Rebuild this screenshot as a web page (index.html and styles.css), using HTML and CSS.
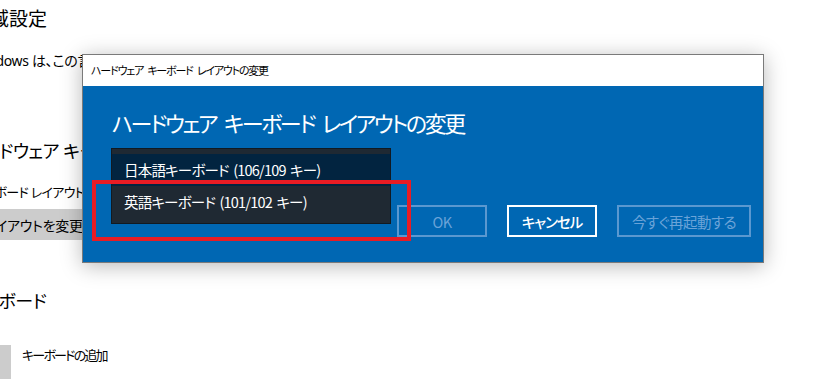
FILE: index.html
```html
<html>
  <head>
    <meta http-equiv="content-type" content="text/html; charset=utf-8" />
    <link rel="stylesheet" href="styles.css">
  </head>
  <body>
    <main class="settings">
      <h1 class="page-title">地域設定</h1>
      <p class="note">Windows は、この言語に基づいていくつかの形式を設定しました。</p>
      <h2 class="section-title hw">ハードウェア キーボード</h2>
      <p class="label">キーボード レイアウト: 日本語キーボード (106/109 キー)</p>
      <button class="grey-btn">レイアウトを変更する</button>
      <h2 class="section-title keyboards">キーボード</h2>
      <div class="add-item">
        <span class="add-icon">+</span>
        <span class="add-text">キーボードの追加</span>
      </div>
    </main>

    <div class="dialog">
      <div class="titlebar">ハードウェア キーボード レイアウトの変更</div>
      <div class="dialog-body">
        <h2 class="dialog-title">ハードウェア キーボード レイアウトの変更</h2>
        <div class="dialog-row">
          <ul class="layout-list">
            <li class="layout-item selected">日本語キーボード (106/109 キー)</li>
            <li class="layout-item">英語キーボード (101/102 キー)</li>
          </ul>
          <div class="buttons">
            <button class="dlg-btn disabled">OK</button>
            <button class="dlg-btn primary">キャンセル</button>
            <button class="dlg-btn disabled wide">今すぐ再起動する</button>
          </div>
        </div>
      </div>
    </div>
    <div class="highlight"></div>
  </body>
</html>
```

FILE: styles.css
```css
body {
  margin: 0;
  padding: 0;
  position: relative;
  width: 830px;
  height: 379px;
  overflow: hidden;
  background: #fff;
  color: #000;
  font-family: "Noto Sans", "Noto Sans CJK JP", sans-serif;
  font-feature-settings: "palt";
}
.settings {
  margin-left: -29px;
  padding-top: 6px;
}
.page-title {
  margin: 0;
  font-size: 19px;
  font-weight: normal;
  line-height: 26px;
}
.note {
  margin: 19px 0 0;
  font-size: 14px;
  line-height: 20px;
  letter-spacing: -0.3px;
  white-space: nowrap;
}
.section-title {
  margin: 66px 0 0;
  font-size: 18px;
  font-weight: normal;
  line-height: 28px;
  letter-spacing: -0.5px;
}
.section-title.hw {
  margin-left: -6px;
}
.label {
  margin: 17px 0 0;
  font-size: 13px;
  line-height: 20px;
  letter-spacing: -0.7px;
  white-space: nowrap;
}
.grey-btn {
  display: block;
  margin-top: 7px;
  height: 31px;
  padding: 0 12px;
  border: none;
  background: #ccc;
  color: #000;
  font-family: inherit;
  font-feature-settings: "palt";
  font-size: 14px;
  letter-spacing: -0.3px;
}
.keyboards {
  margin-top: 47px;
  margin-left: -6px;
}
.add-item {
  display: flex;
  gap: 11px;
  margin-top: 30px;
}
.add-icon {
  width: 40px;
  height: 40px;
  background: #ccc;
  color: #000;
  text-align: center;
  line-height: 40px;
  font-size: 18px;
}
.add-text {
  font-size: 13px;
  line-height: 20px;
  letter-spacing: -1.8px;
}

/* dialog */
.dialog {
  position: absolute;
  left: 82px;
  top: 54px;
  width: 680px;
  border: 1px solid #7a7a7a;
  box-shadow: 0 3px 20px rgba(0, 0, 0, 0.28);
  font-family: "Noto Sans CJK JP", sans-serif;
}
.titlebar {
  height: 31px;
  line-height: 31px;
  padding-left: 8px;
  background: #fff;
  font-size: 11px;
  letter-spacing: -1.2px;
  word-spacing: 3px;
  color: #000;
}
.dialog-body {
  background: #0067b3;
  padding: 20px 12px 25px 29px;
  color: #fff;
}
.dialog-title {
  margin: 0;
  font-size: 22px;
  font-weight: normal;
  line-height: 32px;
  letter-spacing: -2.4px;
  word-spacing: 5px;
}
.dialog-row {
  display: flex;
  align-items: flex-start;
  margin-top: 10px;
  margin-left: -1px;
}
.layout-list {
  list-style: none;
  margin: 0;
  padding: 5px 0;
  width: 278px;
  background: #1f2933;
  border: 1px solid #111a22;
}
.layout-item {
  height: 32px;
  line-height: 32px;
  padding-left: 12px;
  font-size: 14.5px;
  letter-spacing: -0.8px;
  word-spacing: 2px;
  color: #fff;
}
.layout-item.selected {
  background: #022440;
}
.buttons {
  display: flex;
  gap: 20px;
  margin-top: 57px;
  margin-left: 6px;
}
.dlg-btn {
  width: 90px;
  height: 32px;
  background: transparent;
  border: 2px solid #fff;
  color: #fff;
  font-family: inherit;
  font-feature-settings: "palt";
  font-size: 14.5px;
  letter-spacing: -0.5px;
  padding: 0;
}
.dlg-btn.primary {
  font-weight: 500;
  letter-spacing: -1px;
}
.dlg-btn.disabled {
  border-color: #5a98d0;
  color: #6aa3d8;
}
.dlg-btn.wide {
  width: 134px;
}

/* annotation */
.highlight {
  position: absolute;
  left: 92px;
  top: 180px;
  width: 311px;
  height: 53px;
  border: 4px solid #e81c24;
}
```
